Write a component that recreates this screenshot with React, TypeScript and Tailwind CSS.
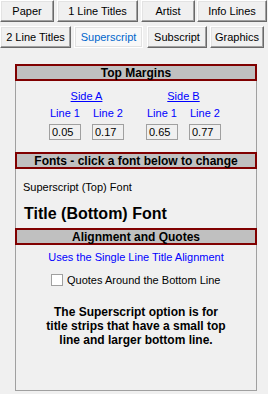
import React from "react";

const tabBase =
  "h-[22px] flex items-center justify-center text-[11px] text-black bg-[#f0f0f0] border border-t-white border-l-white border-r-[#696969] border-b-[#696969] shadow-[inset_-1px_-1px_#a0a0a0,inset_1px_1px_#e3e3e3]";

function Tab({ label, className }: { label: string; className: string }) {
  return <div className={`${tabBase} ${className}`}>{label}</div>;
}

function Header({ title }: { title: string }) {
  return (
    <div className="h-[17px] border-2 border-[#800000] bg-[#c0c0c0] flex items-center justify-center text-[12px] font-bold text-black leading-none">
      {title}
    </div>
  );
}

function Field({ value }: { value: string }) {
  return (
    <div className="w-[32px] h-[16px] border border-[#a0a0a0] bg-[#f0f0f0] text-[11px] leading-[14px] pl-[2px] text-black">
      {value}
    </div>
  );
}

function SideGroup({ side, a, b }: { side: string; a: string; b: string }) {
  return (
    <div className="flex flex-col items-center w-[75px]">
      <span className="underline whitespace-nowrap">{side}</span>
      <div className="flex gap-[11px] mt-[3px]">
        <span className="w-[32px] text-center whitespace-nowrap">Line 1</span>
        <span className="w-[32px] text-center whitespace-nowrap">Line 2</span>
      </div>
      <div className="flex gap-[11px] mt-[4px]">
        <Field value={a} />
        <Field value={b} />
      </div>
    </div>
  );
}

export default function App() {
  return (
    <div
      className="w-[268px] h-[394px] bg-[#f0f0f0] overflow-hidden"
      style={{ fontFamily: '"Liberation Sans", Arial, sans-serif' }}
    >
      {/* tab rows */}
      <div className="flex">
        <Tab label="Paper" className="w-[54px]" />
        <Tab label="1 Line Titles" className="w-[81px] ml-[3px]" />
        <Tab label="Artist" className="w-[54px] ml-[3px]" />
        <Tab label="Info Lines" className="w-[70px] ml-[2px]" />
      </div>
      <div className="flex mt-[4px]">
        <Tab label="2 Line Titles" className="w-[71px]" />
        <div className="w-[69px] ml-[3px] h-[22px] flex items-center justify-center text-[11px] text-[#0066cc] bg-[#f8f8f8] border border-white shadow-[inset_0_0_0_1px_#e2e2e2]">
          Superscript
        </div>
        <Tab label="Subscript" className="w-[60px] ml-[4px]" />
        <Tab label="Graphics" className="w-[54px] ml-[3px]" />
      </div>

      {/* settings panel */}
      <div className="ml-[15px] mt-[16px] w-[242px] h-[327px] border-x border-b border-[#a0a0a0] flex flex-col">
        <div className="-mx-px">
          <Header title="Top Margins" />
        </div>

        <div className="flex mt-[8px] ml-[33px] gap-[22px] text-[11px] leading-[14px] text-[#0000ff]">
          <SideGroup side="Side A" a="0.05" b="0.17" />
          <SideGroup side="Side B" a="0.65" b="0.77" />
        </div>

        <div className="-mx-px mt-[12px]">
          <Header title="Fonts - click a font below to change" />
        </div>
        <div className="pl-[7px] mt-[11px] text-[11px] leading-[14px] text-black">
          Superscript (Top) Font
        </div>
        <div className="pl-[8px] mt-[10px] text-[16px] leading-[20px] font-bold text-black">
          Title (Bottom) Font
        </div>

        <div className="-mx-px mt-[4px]">
          <Header title="Alignment and Quotes" />
        </div>
        <div className="mt-[5px] text-center text-[11px] leading-[14px] text-[#0000ff]">
          Uses the Single Line Title Alignment
        </div>
        <div className="flex items-center mt-[9px] ml-[35px] gap-[4px]">
          <div className="w-[12px] h-[12px] border border-[#a0a0a0] bg-white" />
          <span className="text-[11px] leading-[14px] text-black">Quotes Around the Bottom Line</span>
        </div>
        <div className="mt-[18px] text-center text-[12px] leading-[14px] font-bold text-black">
          The Superscript option is for
          <br />
          title strips that have a small top
          <br />
          line and larger bottom line.
        </div>
      </div>
    </div>
  );
}
